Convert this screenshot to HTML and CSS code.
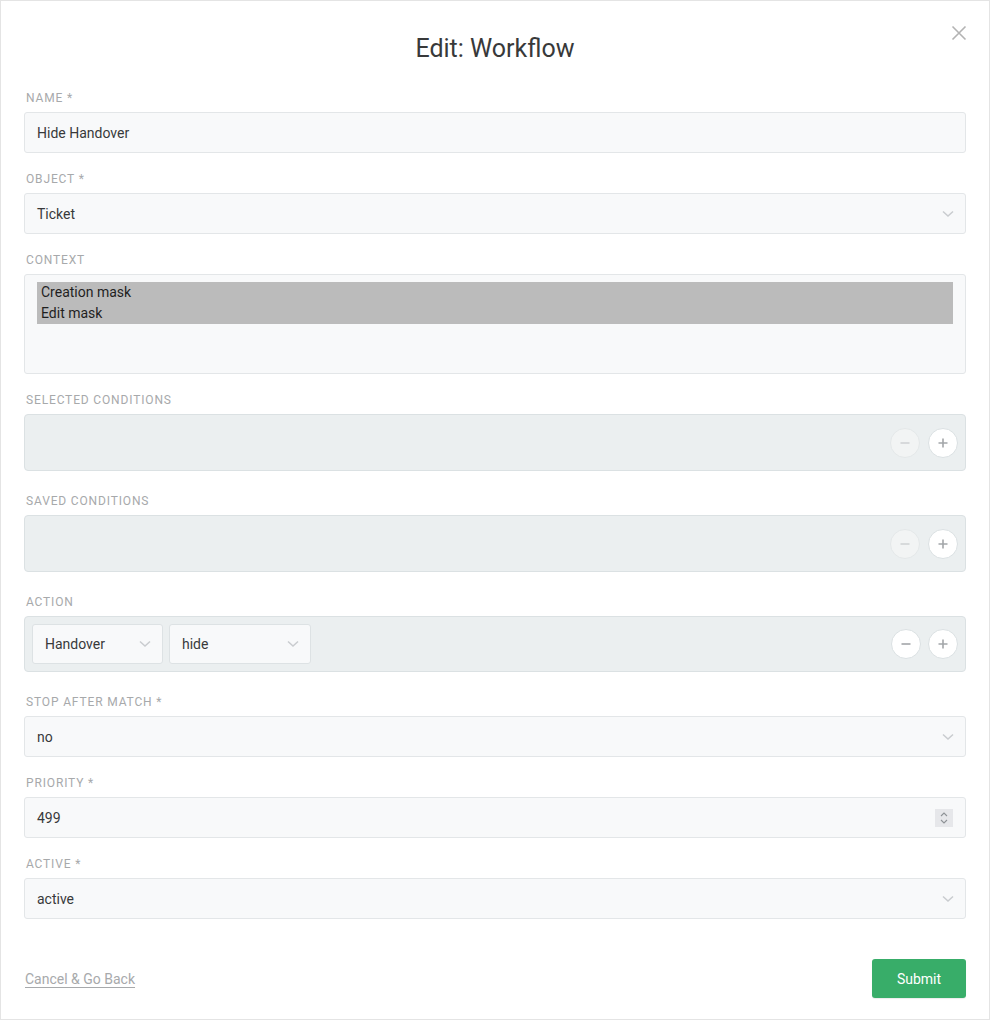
FILE: index.html
```html
<!DOCTYPE html>
<html lang="en">
<head>
<meta charset="utf-8">
<title>Edit: Workflow</title>
<link rel="stylesheet" href="styles.css">
</head>
<body>
<div class="modal">
  <button class="close" aria-label="Close">
    <svg width="16" height="16" viewBox="0 0 16 16"><path d="M1.5 1.5 L14.5 14.5 M14.5 1.5 L1.5 14.5" stroke="#b3b3b3" stroke-width="1.6" fill="none"/></svg>
  </button>
  <h1 class="title">Edit: Workflow</h1>

  <div class="group">
    <div class="label">Name *</div>
    <div class="field">Hide Handover</div>
  </div>

  <div class="group">
    <div class="label">Object *</div>
    <div class="field select">Ticket<span class="chev"><svg width="12" height="8" viewBox="0 0 12 8"><path d="M1 1.5 L6 6 L11 1.5" stroke="#c9cccf" stroke-width="1.5" fill="none"/></svg></span></div>
  </div>

  <div class="group">
    <div class="label">Context</div>
    <div class="multi">
      <div class="opt">Creation mask</div>
      <div class="opt">Edit mask</div>
    </div>
  </div>

  <div class="group cond">
    <div class="label">Selected Conditions</div>
    <div class="rowbox">
      <div class="spacer"></div>
      <span class="circ disabled"><svg width="12" height="12" viewBox="0 0 12 12"><path d="M1.5 6 H10.5" stroke="#d0d3d5" stroke-width="1.6"/></svg></span>
      <span class="circ"><svg width="12" height="12" viewBox="0 0 12 12"><path d="M1.5 6 H10.5 M6 1.5 V10.5" stroke="#a3a6a9" stroke-width="1.6"/></svg></span>
    </div>
  </div>

  <div class="group cond">
    <div class="label">Saved Conditions</div>
    <div class="rowbox">
      <div class="spacer"></div>
      <span class="circ disabled"><svg width="12" height="12" viewBox="0 0 12 12"><path d="M1.5 6 H10.5" stroke="#d0d3d5" stroke-width="1.6"/></svg></span>
      <span class="circ"><svg width="12" height="12" viewBox="0 0 12 12"><path d="M1.5 6 H10.5 M6 1.5 V10.5" stroke="#a3a6a9" stroke-width="1.6"/></svg></span>
    </div>
  </div>

  <div class="group cond">
    <div class="label">Action</div>
    <div class="rowbox action">
      <div class="mini w1">Handover<span class="chev"><svg width="12" height="8" viewBox="0 0 12 8"><path d="M1 1.5 L6 6 L11 1.5" stroke="#c9cccf" stroke-width="1.5" fill="none"/></svg></span></div>
      <div class="mini w2">hide<span class="chev"><svg width="12" height="8" viewBox="0 0 12 8"><path d="M1 1.5 L6 6 L11 1.5" stroke="#c9cccf" stroke-width="1.5" fill="none"/></svg></span></div>
      <div class="spacer"></div>
      <span class="circ"><svg width="12" height="12" viewBox="0 0 12 12"><path d="M1.5 6 H10.5" stroke="#a3a6a9" stroke-width="1.6"/></svg></span>
      <span class="circ"><svg width="12" height="12" viewBox="0 0 12 12"><path d="M1.5 6 H10.5 M6 1.5 V10.5" stroke="#a3a6a9" stroke-width="1.6"/></svg></span>
    </div>
  </div>

  <div class="group">
    <div class="label">Stop after match *</div>
    <div class="field select">no<span class="chev"><svg width="12" height="8" viewBox="0 0 12 8"><path d="M1 1.5 L6 6 L11 1.5" stroke="#c9cccf" stroke-width="1.5" fill="none"/></svg></span></div>
  </div>

  <div class="group">
    <div class="label">Priority *</div>
    <div class="field select">499<span class="spin"><svg width="10" height="14" viewBox="0 0 10 14"><path d="M2 5 L5 2 L8 5 M2 9 L5 12 L8 9" stroke="#8e9296" stroke-width="1.1" fill="none"/></svg></span></div>
  </div>

  <div class="group">
    <div class="label">Active *</div>
    <div class="field select">active<span class="chev"><svg width="12" height="8" viewBox="0 0 12 8"><path d="M1 1.5 L6 6 L11 1.5" stroke="#c9cccf" stroke-width="1.5" fill="none"/></svg></span></div>
  </div>

  <div class="footer">
    <a class="cancel" href="#">Cancel &amp; Go Back</a>
    <button class="submit">Submit</button>
  </div>
</div>
</body>
</html>
```

FILE: styles.css
```css
* { box-sizing: border-box; }
html, body { margin: 0; padding: 0; background: #fff; }
body {
  font-family: Roboto, "Noto Sans", Arial, sans-serif;
  color: #38393a;
  width: 990px;
  height: 1020px;
}
.modal {
  position: relative;
  width: 990px;
  height: 1020px;
  border: 1px solid #e4e4e4;
  padding: 0 23px;
  background: #fff;
}
.close {
  position: absolute;
  top: 24px;
  right: 22px;
  width: 16px;
  height: 16px;
  padding: 0;
  border: 0;
  background: none;
  display: flex;
}
.title {
  margin: 0;
  padding-top: 33px;
  height: 88px;
  font-size: 25px;
  line-height: 30px;
  font-weight: 400;
  text-align: center;
  color: #38393a;
}
.group { margin-bottom: 17px; }
.group.cond { margin-bottom: 21px; }
.label {
  font-size: 12px;
  line-height: 16px;
  letter-spacing: 0.85px;
  text-transform: uppercase;
  color: #a7a9ab;
  padding-left: 2px;
  padding-top: 1px;
  margin-bottom: 6px;
}
.field {
  height: 41px;
  border: 1px solid #e3e6e8;
  border-radius: 3px;
  background: #f8f9fa;
  padding: 0 12px;
  font-size: 14px;
  display: flex;
  align-items: center;
  color: #38393a;
}
.select { justify-content: space-between; }
.chev { display: flex; margin-right: -1px; }
.spin {
  width: 18px;
  height: 18px;
  background: #e6e7ea;
  display: flex;
  align-items: center;
  justify-content: center;
}
.multi {
  height: 100px;
  border: 1px solid #e3e6e8;
  border-radius: 3px;
  background: #f8f9fa;
  padding: 7px 12px;
}
.opt {
  background: #bbbbbb;
  font-size: 14px;
  line-height: 21px;
  padding-left: 4px;
  color: #1f1f1f;
}
.rowbox {
  height: 57px;
  border: 1px solid #dbe1e3;
  border-radius: 4px;
  background: #ebeff0;
  padding: 0 7px;
  display: flex;
  align-items: center;
  gap: 7px;
}
.rowbox.action { height: 56px; gap: 6px; }
.spacer { flex: 1; }
.circ {
  width: 30px;
  height: 30px;
  border-radius: 50%;
  background: #fff;
  border: 1px solid #dbe1e3;
  display: flex;
  align-items: center;
  justify-content: center;
}
.circ.disabled {
  background: #f2f4f4;
  border-color: #e4e8e9;
}
.circ + .circ { margin-left: 1px; }
.mini {
  height: 40px;
  border: 1px solid #dde2e4;
  border-radius: 3px;
  background: #f8f9fa;
  padding: 0 12px;
  font-size: 14px;
  display: flex;
  align-items: center;
  justify-content: space-between;
  color: #38393a;
}
.w1 { width: 131px; }
.w2 { width: 142px; }
.footer {
  margin-top: 40px;
  display: flex;
  justify-content: space-between;
  align-items: center;
  padding-left: 1px;
}
.cancel {
  font-size: 14px;
  color: #a7a9ab;
  text-decoration: underline;
  text-underline-offset: 3px;
}
.submit {
  width: 94px;
  height: 39px;
  border: 0;
  border-radius: 3px;
  background: #38ad69;
  color: #fff;
  font-family: inherit;
  font-size: 14px;
  box-shadow: 0 1px 1px rgba(0,0,0,0.08);
}
```
